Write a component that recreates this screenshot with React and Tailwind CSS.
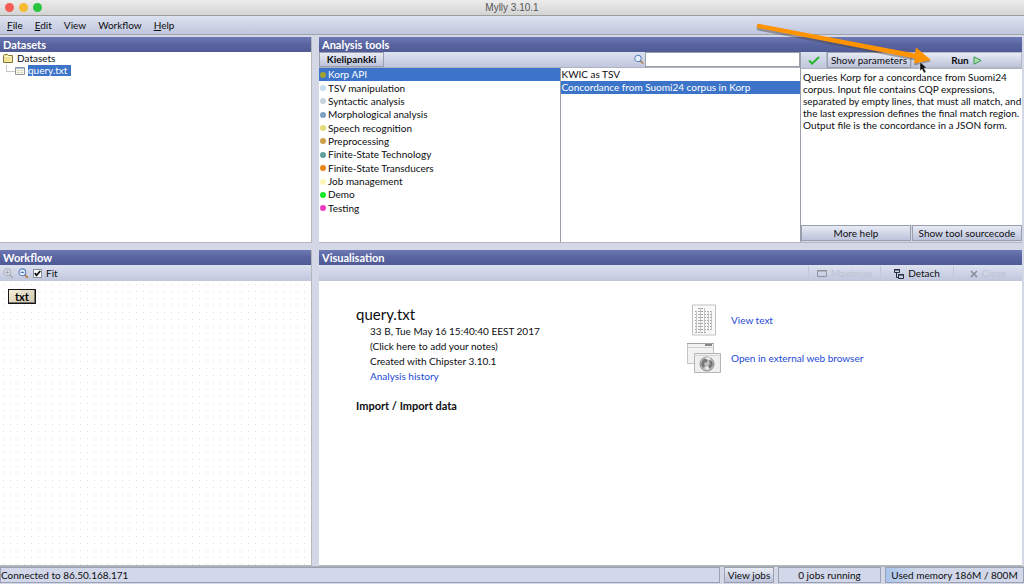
import React, { useState } from 'react';

const categories = [
    { name: 'Korp API', color: '#a3a032' },
    { name: 'TSV manipulation', color: '#c3dcee' },
    { name: 'Syntactic analysis', color: '#c5d3da' },
    { name: 'Morphological analysis', color: '#7f9fc4' },
    { name: 'Speech recognition', color: '#e0dc78' },
    { name: 'Preprocessing', color: '#cda04c' },
    { name: 'Finite-State Technology', color: '#5f9f9f' },
    { name: 'Finite-State Transducers', color: '#e8861c' },
    { name: 'Job management', color: '#fdf6b8' },
    { name: 'Demo', color: '#14e826' },
    { name: 'Testing', color: '#f03cc0' },
];

const tools = ['KWIC as TSV', 'Concordance from Suomi24 corpus in Korp'];

const menus = ['File', 'Edit', 'View', 'Workflow', 'Help'];

const bar = 'bg-linear-to-b from-[#dde2f0] to-[#c0c6dc]';
const raised = 'border border-[#9a9fb0] bg-linear-to-b from-[#e8ebf5] to-[#bcc3da] whitespace-nowrap';

const PanelTitle = ({ children }) => (
    <h2 className="h-[15px] shrink-0 bg-linear-to-b from-[#6d77b3] via-[#5864a0] to-[#505b96] pl-[3px] text-[11px] leading-[15px] font-bold text-white">
        {children}
    </h2>
);

const Magnifier = ({ sign, faded }) => (
    <svg className={faded ? 'size-[11px] opacity-40 grayscale' : 'size-[11px]'} viewBox="0 0 11 11" fill="none">
        <path d="M6.5 6.5 9.8 9.8" stroke="#b78344" strokeWidth="1.8" />
        <circle cx="4.3" cy="4.3" r="3.4" fill="#e4f0fc" stroke="#5b80bb" strokeWidth="1.1" />
        {sign && <path d={sign} stroke="#3c5c99" />}
    </svg>
);

const FolderIcon = () => (
    <svg className="h-[9px] w-[10px]" viewBox="0 0 10 9">
        <path d="M.5 8.5v-7l1-1h3l1 1h4v7z" fill="#f0e394" stroke="#827a3d" />
        <path d="M1 2.5h7v5" fill="none" stroke="#fff8c8" />
    </svg>
);

const FileIcon = () => (
    <svg className="h-[8px] w-[10px]" viewBox="0 0 10 8">
        <path d="M.5 7.5v-7h9v7z" fill="#f8f8ec" stroke="#8f959c" />
        <path d="M1 1.5h8" stroke="#a5c1e5" />
        <path d="M2 3.5h2M5 3.5h3M2 5.5h2M5 5.5h3" stroke="#d9d6b8" />
    </svg>
);

const TextIcon = () => (
    <svg className="h-[32px] w-[26px]" viewBox="0 0 26 32" fill="none">
        <path d="M1.5 1h23v30h-23z" fill="#fafafa" stroke="#c0c0c0" />
        <path d="M7 4.5h7M4 7.5h18M4 10.5h18M4 13.5h18M4 16.5h17M4 19.5h18M4 22.5h18M4 25.5h18M4 28.5h12" stroke="#a2a2a2" strokeDasharray="2 1" />
        <path d="M5.5 7v21M9.5 4v24M13.5 4v24M17.5 7v20M20.5 7v19" stroke="#c4c4c4" />
    </svg>
);

const BrowserIcon = () => (
    <svg className="h-[32px] w-[34px]" viewBox="0 0 34 32" fill="none">
        <path d="M.5 1.5h26v20h-26z" fill="#f2f2f2" stroke="#c4c4c4" />
        <path d="M0 1.5h27" stroke="#a0a0a0" />
        <path d="M18 3h7" stroke="#888" strokeWidth="2" />
        <path d="M1 5.5h25" stroke="#d0d0d0" />
        <path d="M7.5 11.5h26v19h-26z" fill="#eee" stroke="#b5b5b5" />
        <path d="M8 13.5h25" stroke="#d8d8d8" />
        <circle cx="20" cy="22" r="7" fill="#c0c0c0" stroke="#8c8c8c" />
        <path d="M15 19l3-3 3 1-1 3-3 1 1 3-2 2-2-3zM22 18l3 1 1 4-3 4-2-3 2-2z" fill="#777" />
        <path d="M17 16l5-1 2 2-3 1zM18 26l3-2 1 3-2 1z" fill="#eee" />
    </svg>
);

const App = () => {
    const [category, setCategory] = useState('Korp API');
    const [tool, setTool] = useState(tools[1]);
    const [fit, setFit] = useState(true);

    return (
        <div className="relative flex h-screen flex-col overflow-hidden bg-[#d3d7e6] font-['Lato','Noto_Sans',sans-serif] text-[10px] leading-[13px] text-[#0c0d10]">
            <header className="relative flex h-4 shrink-0 items-center justify-center border-b border-[#9c9e9a] bg-linear-to-b from-[#ececec] to-[#d4d4d4]">
                <div className="absolute left-[5px] flex gap-[5px]">
                    <span className="size-[9px] rounded-full bg-[#f45c55]" />
                    <span className="size-[9px] rounded-full bg-[#f6bb32]" />
                    <span className="size-[9px] rounded-full bg-[#29c53f]" />
                </div>
                <h1 className="font-['Liberation_Sans',sans-serif] text-[10px] text-[#555]">Mylly 3.10.1</h1>
            </header>

            <nav className={`flex h-[19px] shrink-0 items-center gap-3 border-b border-[#9fa4a8] pl-[7px] ${bar}`}>
                {menus.map((m) => (
                    <button key={m} type="button">
                        {m === 'View' || m === 'Workflow' ? m : <><u>{m[0]}</u>{m.slice(1)}</>}
                    </button>
                ))}
            </nav>

            <main className="grid min-h-0 flex-1 grid-cols-[312fr_703fr] grid-rows-[206fr_316fr] gap-x-[7px] gap-y-[7px] pt-0.5 pr-0.5">
                <section className="flex min-h-0 flex-col border-r border-b border-[#b5b7bb] bg-white">
                    <PanelTitle>Datasets</PanelTitle>
                    <ul className="pl-[3px]">
                        <li>
                            <div className="flex items-center gap-1"><FolderIcon />Datasets</div>
                            <ul>
                                <li className="flex items-center pl-[3px]">
                                    <span className="mb-1 h-[7px] w-[9px] border-b border-l border-[#c9c9c9]" />
                                    <FileIcon />
                                    <button type="button" className="ml-[3px] h-[11px] bg-[#3b74c8] pr-1 leading-[11px] text-white">query.txt</button>
                                </li>
                            </ul>
                        </li>
                    </ul>
                </section>

                <section className="flex min-h-0 flex-col border-b border-[#b5b7bb] bg-white">
                    <PanelTitle>Analysis tools</PanelTitle>
                    <div className="grid min-h-0 flex-1 grid-cols-[482fr_221fr]">
                        <div className="flex flex-col border-r border-[#9b9ea8]">
                            <div className={`grid h-4 shrink-0 grid-cols-2 border-b border-[#aeb3bf] ${bar}`}>
                                <button type="button" className={`w-[65px] font-bold ${raised}`}>Kielipankki</button>
                                <label className="flex items-center pl-[74px]">
                                    <Magnifier />
                                    <input type="text" aria-label="Search tools" className="ml-px h-[15px] w-full min-w-0 border border-[#9a9fa8] bg-white px-1" />
                                </label>
                            </div>
                            <div className="grid min-h-0 flex-1 grid-cols-2">
                                <ul className="grid h-[147px] auto-rows-fr">
                                    {categories.map((c) => (
                                        <li key={c.name} className="min-h-0">
                                            <button
                                                type="button"
                                                onClick={() => setCategory(c.name)}
                                                className={`flex h-full w-full items-center gap-[2px] pl-px ${category === c.name ? 'bg-[#3b74c8] text-white' : ''}`}
                                            >
                                                <span className="size-[6px] rounded-full" style={{ backgroundColor: c.color }} />
                                                {c.name}
                                            </button>
                                        </li>
                                    ))}
                                </ul>
                                <ul className="border-l border-[#9b9ea8]">
                                    {tools.map((t) => (
                                        <li key={t}>
                                            <button
                                                type="button"
                                                onClick={() => setTool(t)}
                                                className={`block w-full pl-px text-left whitespace-nowrap ${tool === t ? 'bg-[#3b74c8] text-white' : ''}`}
                                            >
                                                {t}
                                            </button>
                                        </li>
                                    ))}
                                </ul>
                            </div>
                        </div>

                        <div className="flex min-w-0 flex-col">
                            <div className={`flex h-[17px] shrink-0 border-b border-[#aeb3bf] ${bar}`}>
                                <div className="flex w-[26px] items-center justify-center border-r border-[#b3b8c8]">
                                    <svg className="h-[9px] w-3" viewBox="0 0 12 9" fill="none" stroke="#2bb52f" strokeWidth="2">
                                        <path d="M1 4.5 4.2 7.5 11 1" />
                                    </svg>
                                </div>
                                <button type="button" className={`w-[84px] ${raised}`}>Show parameters</button>
                                <button type="button" className="flex flex-1 items-center justify-center gap-1 border border-[#b3b8c8] bg-linear-to-b from-[#e8ebf5] to-[#bcc3da] font-bold">
                                    Run
                                    <svg className="size-[9px]" viewBox="0 0 9 9">
                                        <path d="M1 .8 8.2 4.5 1 8.2z" fill="#a8dda8" stroke="#3d9a54" />
                                    </svg>
                                </button>
                            </div>
                            <p className="flex-1 pt-0.5 pl-[2px] leading-[12px]">
                                Queries Korp for a concordance from Suomi24 corpus. Input file contains CQP expressions, separated by empty lines, that must all match, and the last expression defines the final match region. Output file is the concordance in a JSON form.
                            </p>
                            <div className="grid h-[17px] shrink-0 grid-cols-2 gap-px bg-[#d3d7e6] pb-px">
                                <button type="button" className={raised}>More help</button>
                                <button type="button" className={raised}>Show tool sourcecode</button>
                            </div>
                        </div>
                    </div>
                </section>

                <section className="flex min-h-0 flex-col border-r border-b border-[#b5b7bb] bg-white">
                    <PanelTitle>Workflow</PanelTitle>
                    <div className={`flex h-4 shrink-0 items-center pl-[3px] ${bar}`}>
                        <button type="button" aria-label="Zoom in"><Magnifier sign="M2.5 4.3h3.6M4.3 2.5v3.6" faded /></button>
                        <button type="button" aria-label="Zoom out" className="ml-1"><Magnifier sign="M2.5 4.3h3.6" /></button>
                        <label className="ml-1 flex items-center gap-1">
                            <span className="grid size-[9px] place-items-center">
                                <input type="checkbox" checked={fit} onChange={(e) => setFit(e.target.checked)} className="col-start-1 row-start-1 size-[9px] appearance-none border border-[#8a8f9c] bg-white" />
                                {fit && (
                                    <svg className="pointer-events-none z-10 col-start-1 row-start-1 size-[7px]" viewBox="0 0 7 7" fill="none" stroke="#111" strokeWidth="1.8">
                                        <path d="M.8 3 2.5 5.3 6.3 1" />
                                    </svg>
                                )}
                            </span>
                            Fit
                        </label>
                    </div>
                    <div className="flex-1 bg-[radial-gradient(circle_at_center,#dedede_0.5px,transparent_1px)] bg-size-[7px_7px] pt-2 pl-2">
                        <button type="button" className="block h-[15px] w-7 border border-[#171717] bg-linear-to-br from-[#f5eedb] to-[#cfc5ac] text-[11px] leading-[14px] font-bold text-black shadow-[inset_-1px_-1px_#77736a]">txt</button>
                    </div>
                </section>

                <section className="flex min-h-0 flex-col border-b border-[#b5b7bb] bg-white">
                    <PanelTitle>Visualisation</PanelTitle>
                    <div className={`flex h-4 shrink-0 justify-end pt-px ${bar}`}>
                        <button type="button" disabled className="flex w-[72px] items-center justify-center gap-1 border-l border-[#c3c8d8] text-[#bcc2d3]">
                            <svg className="h-[7px] w-[10px]" viewBox="0 0 10 7" fill="none" stroke="#8f949f">
                                <path d="M.5.5h9v6h-9zM0 1h10" />
                            </svg>
                            Maximise
                        </button>
                        <button type="button" className="flex w-[73px] items-center justify-center gap-1 border-l border-[#c3c8d8]">
                            <svg className="size-[10px]" viewBox="0 0 10 10" fill="none" stroke="#222e40">
                                <path d="M.5.5h5v3h-5zM0 1h6M2.5 4v4.5H4M4.5 5.5h5v4h-5zM4 6h6" />
                            </svg>
                            Detach
                        </button>
                        <button type="button" disabled className="flex w-[69px] items-center justify-center gap-1 border-l border-[#c3c8d8] text-[#bcc2d3]">
                            <svg className="size-2" viewBox="0 0 8 8" fill="none" stroke="#858a96" strokeWidth="1.5">
                                <path d="M1 1l6 6M7 1 1 7" />
                            </svg>
                            Close
                        </button>
                    </div>
                    <div className="grid flex-1 grid-cols-[331fr_335fr] pt-[23px] pl-[37px]">
                        <div>
                            <h3 className="text-[15px] leading-5">query.txt</h3>
                            <div className="flex flex-col items-start pl-[14px] leading-[15px]">
                                <p>33 B, Tue May 16 15:40:40 EEST 2017</p>
                                <button type="button">(Click here to add your notes)</button>
                                <p>Created with Chipster 3.10.1</p>
                                <a href="#history" className="text-[#2349d8]">Analysis history</a>
                            </div>
                            <h4 className="mt-[15px] text-[11px] font-bold">Import / Import data</h4>
                        </div>
                        <div className="flex flex-col gap-[6px]">
                            <a href="#text" className="flex items-center text-[#2349d8]">
                                <span className="flex w-11 pl-1"><TextIcon /></span>
                                View text
                            </a>
                            <a href="#browser" className="flex items-center text-[#2349d8]">
                                <span className="flex w-11"><BrowserIcon /></span>
                                Open in external web browser
                            </a>
                        </div>
                    </div>
                </section>
            </main>

            <footer className="flex h-[18px] shrink-0 gap-1 border-t border-[#aeb1b6] pb-px whitespace-nowrap">
                <div className="flex flex-1 items-center border border-[#9aa1b5] bg-[#d2d8e9]">Connected to 86.50.168.171</div>
                <button type="button" className={`w-[50px] ${raised}`}>View jobs</button>
                <div className="flex w-[103px] items-center justify-center border border-[#9aa1b5] bg-[#d2d8e9]">0 jobs running</div>
                <div className="relative flex w-[139px] items-center justify-center border border-[#9aa1b5] bg-[#d2d8e9]">
                    <div className="absolute inset-y-0 left-0 bg-linear-to-r from-[#a9c5ec] to-[#d2d8e9]" style={{ width: `${(186 / 800) * 100}%` }} />
                    <span className="relative">Used memory 186M / 800M</span>
                </div>
            </footer>

            {/* pointer towards the Run button */}
            <svg className="pointer-events-none absolute top-5 right-[84px] h-[56px] w-[184px]" viewBox="0 0 184 56">
                <path d="M1 5q1-2 3-1L159 34l1-6 15 12-17 4 1-5L2 9Q0 8 1 5z" transform="translate(0 1.5)" fill="#4d4444" opacity=".45" />
                <path d="M1 5q1-2 3-1L159 33.500l1-6 15 12.500-17 3.500 1-5L2 8Q0 7 1 5z" fill="#ff9300" />
                <path d="M164 42v9l2-2 2 4 2-1-2-4h3z" fill="#111" stroke="#fff" strokeWidth=".4" />
            </svg>
        </div>
    );
};

export default App;
